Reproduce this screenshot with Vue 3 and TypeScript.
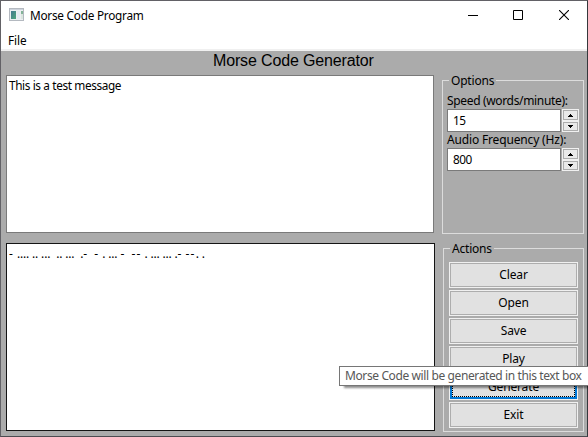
<script setup lang="ts">
import { computed, ref } from 'vue'

const message = ref('This is a test message')
const morse = ref('- .... .. ...  .. ...  .-  - . ... -  -- . ... ... .- --. .')
const morseRuns = computed(() => morse.value.match(/-+|[^-]+/g) ?? [])
const options = [
  { label: 'Speed (words/minute):', value: '15', cls: 'speed' },
  { label: 'Audio Frequency (Hz):', value: '800', cls: 'freq' },
]
const actions = ['Clear', 'Open', 'Save', 'Play', 'Generate', 'Exit']
</script>

<template>
  <div class="window">
    <header class="titlebar">
      <svg class="app-icon" width="15" height="13" viewBox="0 0 15 13" shape-rendering="crispEdges">
        <defs>
          <linearGradient id="pane" x1="0" y1="0" x2="1" y2="1">
            <stop offset="0" stop-color="#44788f" />
            <stop offset="1" stop-color="#4fa77c" />
          </linearGradient>
        </defs>
        <rect x="0.5" y="0.5" width="14" height="12" fill="#eceff1" stroke="#b4b9c0" />
        <rect x="1" y="1" width="13" height="1" fill="#cdd3dc" />
        <rect x="2" y="3" width="5" height="8" fill="url(#pane)" />
        <rect x="8" y="3" width="3" height="8" fill="#e6eaf0" />
        <rect x="12" y="3" width="2" height="3" fill="#83b398" />
        <rect x="12" y="6" width="2" height="5" fill="#dbe6df" />
      </svg>
      <span class="title">Morse Code Program</span>
      <div class="controls">
        <svg width="10" height="10" viewBox="0 0 10 10"><path d="M0 5.5H10" stroke="#000" /></svg>
        <svg width="10" height="10" viewBox="0 0 10 10"><path d="M.5 .5H9.5V9.5H.5Z" fill="none" stroke="#000" /></svg>
        <svg class="close" width="10" height="10" viewBox="0 0 10 10"><path d="M0 0L10 10M10 0L0 10" stroke="#000" stroke-width="1.1" /></svg>
      </div>
    </header>
    <nav class="menubar"><span class="menu">File</span></nav>
    <main class="content">
      <h1 class="heading"><span>Morse Code Generator</span></h1>
      <div class="row top">
        <div class="textbox input"><span class="message">{{ message }}</span></div>
        <section class="group options">
          <h2 class="legend"><span>Options</span></h2>
          <div v-for="o in options" :key="o.label" class="field">
            <label :class="['label', o.cls]">{{ o.label }}</label>
            <div class="spinner">
              <div class="value">{{ o.value }}</div>
              <div class="arrows">
                <button class="arrow"><svg width="5" height="3" viewBox="0 0 5 3" shape-rendering="crispEdges"><path d="M2 0H3V1H4V2H5V3H0V2H1V1H2Z" /></svg></button>
                <button class="arrow"><svg width="5" height="3" viewBox="0 0 5 3" shape-rendering="crispEdges"><path d="M0 0H5V1H4V2H3V3H2V2H1V1H0Z" /></svg></button>
              </div>
            </div>
          </div>
        </section>
      </div>
      <div class="row bottom">
        <div class="textbox output"><div class="morse"><span v-for="(run, i) in morseRuns" :key="i" :class="{ dash: run[0] === '-' }">{{ run }}</span></div></div>
        <section class="group actions">
          <h2 class="legend"><span>Actions</span></h2>
          <div class="buttons">
            <button v-for="a in actions" :key="a" :class="['action', { focused: a === 'Generate' }]"><span>{{ a }}</span></button>
          </div>
        </section>
      </div>
    </main>
  </div>
  <div class="tooltip"><span>Morse Code will be generated in this text box</span></div>
</template>

<style>
body { overflow: hidden; }
</style>

<style scoped>
* { box-sizing: border-box; }
.window {
  display: flex;
  flex-direction: column;
  width: 588px;
  height: 437px;
  overflow: hidden;
  border: 1px solid #626166;
  border-right-color: #35383c;
  border-bottom-color: #4b4b50;
  background: #fff;
  color: #000;
  font: 12px/16px "Noto Sans", "Open Sans", sans-serif;
  white-space: pre;
}
.titlebar { display: flex; align-items: center; height: 30px; padding: 0 16px 0 8px; }
.app-icon { display: block; margin-top: -3px; }
.title { margin: -2px 0 0 6px; font-size: 11.8px; letter-spacing: -0.25px; }
.controls { display: flex; gap: 35px; margin: -2px 2px 0 auto; }
.controls svg { display: block; }
.controls .close { margin-left: 1px; }
.menubar { height: 20px; padding: 1px 7px 0; border-bottom: 2px solid #f0f0f0; font-size: 11.8px; }
.menu { letter-spacing: -0.1px; }
.content { display: flex; flex-direction: column; flex: 1; background: #ababab; padding: 0 3px 4px 5px; }
.heading { margin: 0; height: 24px; padding-left: 207px; font: 16px/19px "Liberation Sans", Arial, sans-serif; letter-spacing: -0.15px; }
.row { display: flex; align-items: flex-start; }
.top { height: 168px; }
.bottom { flex: 1; }
.textbox { background: #fff; padding: 1px 2px; }
.input { width: 428px; height: 158px; border: 1px solid #7a7a7a; }
.output { width: 429px; height: 188px; border: 1px solid #141414; }
.message { display: block; letter-spacing: -0.38px; font-size: 11.8px; }
.morse { padding-top: 1px; letter-spacing: -0.2px; word-spacing: 0.08px; }
.dash { letter-spacing: 1.14px; }
.group { position: relative; border: 1px solid #dcdcdc; }
.options { width: 142px; height: 154px; margin: 5px 0 0 8px; padding: 12px 3px 0 4px; }
.actions { width: 141px; height: 184px; margin: 5px 0 0 8px; padding: 13px 5px 0; }
.legend { position: absolute; top: -8px; left: 6px; margin: 0; padding: 0 2px; background: #ababab; font-size: 12px; font-weight: 400; line-height: 16px; letter-spacing: -0.2px; }
.field { height: 39px; }
.label { display: block; height: 16px; }
.speed { letter-spacing: -0.34px; }
.freq { letter-spacing: -0.16px; }
.spinner { display: flex; gap: 1px; height: 23px; }
.value { width: 114px; height: 23px; border: 1px solid #7a7a7a; background: #fff; padding: 2px 5px; font-size: 11.8px; letter-spacing: -0.45px; }
.arrows { display: flex; flex-direction: column; width: 17px; }
.arrow { display: flex; align-items: center; justify-content: center; height: 12px; border: 1px solid #f0f0f0; background: #e9e9e9; outline: 1px solid #adadad; outline-offset: -2px; padding: 0; }
.arrow + .arrow { height: 11px; }
.buttons { display: flex; flex-direction: column; gap: 2px; }
.action { position: relative; width: 129px; height: 26px; border: 1px solid #f0f0f0; outline: 1px solid #adadad; outline-offset: -2px; background: #e1e1e1; color: #000; font: 12px/16px "Noto Sans", "Open Sans", sans-serif; letter-spacing: -0.15px; padding: 0; }
.focused { outline: 2px solid #0078d7; outline-offset: -3px; }
.focused::after { content: ""; position: absolute; inset: 2px; border: 1px dotted #000; }
.tooltip { position: absolute; left: 339px; top: 366px; width: 249px; height: 20px; border: 1px solid #767676; border-right: 0; background: #fff; padding: 1px 5px; color: #575757; box-shadow: 4px 3px 2px -1px rgba(0, 0, 0, 0.45); font: 12px/16px "Noto Sans", "Open Sans", sans-serif; letter-spacing: -0.39px; white-space: nowrap; }
</style>
